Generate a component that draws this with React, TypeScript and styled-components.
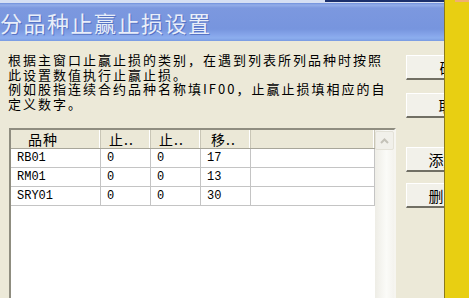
import React from 'react';
import styled, { createGlobalStyle } from 'styled-components';

const GlobalStyle = createGlobalStyle`
  html, body {
    margin: 0;
    padding: 0;
    background: #ece9d8;
    overflow: hidden;
  }
`;

const Screen = styled.div`
  display: flex;
  width: 469px;
  height: 298px;
  overflow: hidden;
  font-family: "Noto Sans CJK SC", "Liberation Sans", sans-serif;
`;

const Dialog = styled.div`
  flex: 0 0 444px;
  display: flex;
  flex-direction: column;
  overflow: hidden;
  background: #ece9d8;
`;

const TopStrip = styled.div`
  flex-shrink: 0;
  height: 3px;
  display: flex;
  background: #d6dff3;
`;

const DarkEdge = styled.div`
  margin-left: auto;
  width: 119px;
  height: 2px;
  background: #1b2f6c;
`;

const TitleBar = styled.div`
  flex-shrink: 0;
  height: 38px;
  display: flex;
  align-items: center;
  background: linear-gradient(
    to bottom,
    #6f8fdc 0px,
    #93ade9 2px,
    #7c98df 5px,
    #7795de 26px,
    #86a5ea 32px,
    #8caeee 35px,
    #7a9be2 38px
  );
`;

const TitleText = styled.span`
  font-size: 22px;
  line-height: 24px;
  color: #e9eef9;
  letter-spacing: 1.5px;
  text-shadow: 1px 1px 0 #5673c4;
  white-space: nowrap;
`;

const Body = styled.div`
  flex-shrink: 0;
  display: flex;
  padding-left: 8px;
`;

const LeftColumn = styled.div`
  flex: 0 0 388px;
  display: flex;
  flex-direction: column;
`;

const Notes = styled.div`
  flex-shrink: 0;
  margin-top: 12px;
  font-size: 13px;
  letter-spacing: 2px;
  line-height: 14.5px;
  color: #000;
  width: 382px;
`;

const ListView = styled.div`
  flex-shrink: 0;
  margin-top: 17px;
  margin-left: 1px;
  height: 180px;
  display: flex;
  border-top: 2px solid #8f8d80;
  border-left: 2px solid #8f8d80;
  border-right: 2px solid #f6f5f0;
  background: #fff;
`;

const Grid = styled.div`
  flex: 1;
  display: flex;
  flex-direction: column;
`;

const HeaderRow = styled.div`
  display: flex;
  height: 18px;
  background: #ebe8d7;
  border-bottom: 1px solid #a8a69a;
`;

const HeaderCell = styled.div<{ $w?: number; $pad?: number }>`
  ${(p) => (p.$w ? `width: ${p.$w}px; flex-shrink: 0;` : 'flex: 1;')}
  box-sizing: border-box;
  padding-left: ${(p) => p.$pad ?? 8}px;
  border-right: 1px solid #c9c6b6;
  box-shadow: inset -1px 0 0 #fff;
  font-size: 14px;
  letter-spacing: 1px;
  line-height: 18px;
  color: #000;
  overflow: hidden;
  white-space: nowrap;
`;

const Row = styled.div`
  display: flex;
  height: 18px;
  border-bottom: 1px solid #c4c4c4;
`;

const Cell = styled.div<{ $w?: number }>`
  ${(p) => (p.$w ? `width: ${p.$w}px; flex-shrink: 0;` : 'flex: 1;')}
  box-sizing: border-box;
  border-right: 1px solid #c4c4c4;
  padding-left: 6px;
  font-family: "Liberation Mono", monospace;
  font-size: 12px;
  line-height: 18px;
  color: #000;
  overflow: hidden;
  white-space: nowrap;
`;

const ScrollBar = styled.div`
  flex: 0 0 19px;
  display: flex;
  flex-direction: column;
  align-items: center;
  background: linear-gradient(to right, #eeede6, #fbfbf8 60%, #f4f3ee);
`;

const ArrowButton = styled.div`
  margin-top: 1px;
  width: 17px;
  height: 17px;
  display: flex;
  align-items: center;
  justify-content: center;
  border: 1px solid #e4e2d8;
  border-radius: 2px;
  background: #f1f0ea;
`;

const ButtonColumn = styled.div`
  flex-shrink: 0;
  margin-left: 10px;
  display: flex;
  flex-direction: column;
`;

const DialogButton = styled.div<{ $w: number; $top: number }>`
  flex-shrink: 0;
  margin-top: ${(p) => p.$top}px;
  width: ${(p) => p.$w}px;
  height: 25px;
  box-sizing: border-box;
  display: flex;
  align-items: center;
  justify-content: center;
  background: #f2f1ea;
  border-top: 1px solid #fff;
  border-left: 1px solid #fff;
  border-bottom: 2px solid #716f64;
  font-size: 15px;
  color: #000;
  white-space: nowrap;
`;

const SidePanel = styled.div`
  flex: 1;
  background: #e8cf12;
  border-left: 1px solid #8a7a1e;
  display: flex;
  flex-direction: column;
  align-items: flex-end;
`;

const Corner = styled.div`
  width: 14px;
  height: 2px;
  background: #f0b070;
`;

const rows = [
  ['RB01', '0', '0', '17'],
  ['RM01', '0', '0', '13'],
  ['SRY01', '0', '0', '30'],
];

const widths = [90, 50, 50, 50];

export default function App() {
  return (
    <>
      <GlobalStyle />
      <Screen>
        <Dialog>
          <TopStrip>
            <DarkEdge />
          </TopStrip>
          <TitleBar>
            <TitleText>分品种止赢止损设置</TitleText>
          </TitleBar>
          <Body>
            <LeftColumn>
              <Notes>
                根据主窗口止赢止损的类别，在遇到列表所列品种时按照此设置数值执行止赢止损。
                <br />
                例如股指连续合约品种名称填IF00，止赢止损填相应的自定义数字。
              </Notes>
              <ListView>
                <Grid>
                  <HeaderRow>
                    <HeaderCell $w={90} $pad={17}>品种</HeaderCell>
                    <HeaderCell $w={50} $pad={8}>止..</HeaderCell>
                    <HeaderCell $w={50} $pad={8}>止..</HeaderCell>
                    <HeaderCell $w={50} $pad={10}>移..</HeaderCell>
                    <HeaderCell />
                  </HeaderRow>
                  {rows.map((r) => (
                    <Row key={r[0]}>
                      {r.map((v, i) => (
                        <Cell key={i} $w={widths[i]}>
                          {v}
                        </Cell>
                      ))}
                      <Cell />
                    </Row>
                  ))}
                </Grid>
                <ScrollBar>
                  <ArrowButton>
                    <svg width="9" height="6" viewBox="0 0 9 6">
                      <path d="M1 5 L4.5 1.5 L8 5" stroke="#c4c2b8" strokeWidth="2" fill="none" />
                    </svg>
                  </ArrowButton>
                </ScrollBar>
              </ListView>
            </LeftColumn>
            <ButtonColumn>
              <DialogButton $w={96} $top={14}>确定</DialogButton>
              <DialogButton $w={94} $top={13}>取消</DialogButton>
              <DialogButton $w={74} $top={29}>添加</DialogButton>
              <DialogButton $w={74} $top={11}>删除</DialogButton>
            </ButtonColumn>
          </Body>
        </Dialog>
        <SidePanel>
          <Corner />
        </SidePanel>
      </Screen>
    </>
  );
}
